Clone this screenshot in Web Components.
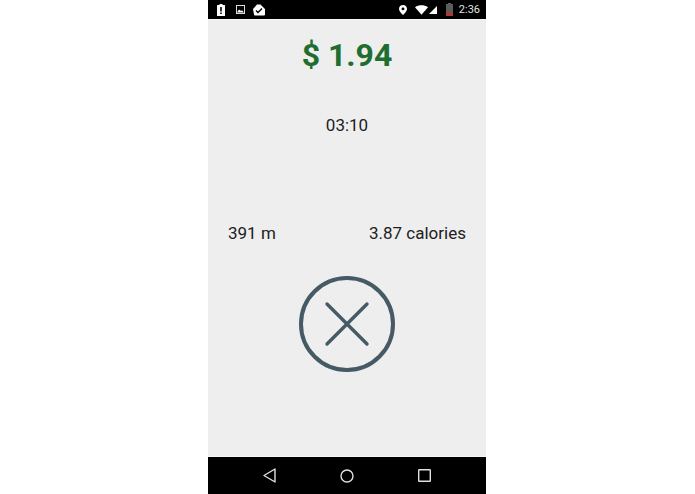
<!DOCTYPE html>
<html>
<head>
<meta charset="utf-8">
<title>Ride</title>
<style>
    html, body { margin: 0; height: 100%; background: #fff; }
    body { display: flex; justify-content: center; font-family: Roboto, sans-serif; }
</style>
</head>
<body>
<phone-screen>
    <status-bar slot="top"></status-bar>
    <trip-panel price="$ 1.94" time="03:10" distance="391 m" calories="3.87 calories"></trip-panel>
    <nav-bar slot="bottom"></nav-bar>
</phone-screen>

<script>
class PhoneScreen extends HTMLElement {
    constructor() {
        super();
        this.attachShadow({ mode: 'open' });
        this.shadowRoot.innerHTML = `
            <style>
                :host {
                    display: flex;
                    flex-direction: column;
                    width: 278px;
                    height: 494px;
                    margin-left: -1px;
                    background: #eeeeee;
                }
            </style>
            <slot name="top"></slot>
            <slot></slot>
            <slot name="bottom"></slot>
        `;
    }
}

class StatusBar extends HTMLElement {
    constructor() {
        super();
        this.attachShadow({ mode: 'open' });
        this.shadowRoot.innerHTML = `
            <style>
                :host {
                    display: flex;
                    align-items: center;
                    height: 19px;
                    padding: 0 6px 0 9px;
                    background: #000;
                    color: #fff;
                    border-bottom: 1px solid #f6f6f6;
                }
                .left, .right { display: flex; align-items: center; }
                .right { margin-left: auto; }
                svg { display: block; }
                .clock { font-size: 11px; color: #e4e4e4; margin-left: 6px; }
            </style>
            <div class="left">
                <svg width="8" height="12" viewBox="0 0 8 12" style="margin-right:11px">
                    <path fill="#fff" fill-rule="evenodd" d="M2.500 0h3v1H7.500a.5.5 0 0 1 .5.5V11.500a.5.5 0 0 1-.5.5H.5a.5.5 0 0 1-.5-.5V1.500a.5.5 0 0 1 .5-.5H2.500zM3.200 3v4.500h1.600V3zM3.200 8.500V10h1.600V8.500z"/>
                </svg>
                <svg width="9" height="9" viewBox="0 0 9 9" style="margin-right:8px">
                    <rect x=".5" y=".5" width="8" height="8" fill="none" stroke="#ddd"/>
                    <path fill="#fff" d="M1 7.500 3 4.500 5 6l1-.8L8 7.500z"/>
                </svg>
                <svg width="12" height="12" viewBox="0 0 12 12">
                    <path fill="#fff" d="M4 .5h3.500L12 5v5.500a1 1 0 0 1-1 1H2a1 1 0 0 1-1-1L0 5z"/>
                    <path fill="none" stroke="#000" stroke-width="1.400" d="M3 6.500 5 8.500 9 4.500"/>
                </svg>
            </div>
            <div class="right">
                <svg width="8" height="10" viewBox="0 0 9 11" style="margin-right:8px">
                    <path fill="#fff" fill-rule="evenodd" d="M4.500 0C2 0 0 1.900 0 4.300 0 7.300 4.500 11 4.500 11S9 7.300 9 4.300C9 1.900 7 0 4.500 0zM4.500 2.700a1.600 1.600 0 1 1 0 3.200 1.600 1.600 0 0 1 0-3.200z"/>
                </svg>
                <svg width="13" height="10" viewBox="0 0 14 10" style="margin-right:1px">
                    <path fill="#fff" d="M0 2C4-.7 10-.7 14 2L7 10z"/>
                </svg>
                <svg width="8" height="10" viewBox="0 0 10 10" style="margin-right:9px">
                    <path fill="#fff" d="M10 0V10H0z"/>
                </svg>
                <svg width="7" height="13" viewBox="0 0 7 13">
                    <rect x="2" y="0" width="3" height="1.500" fill="#666"/>
                    <rect x="0" y="1" width="7" height="12" fill="#5c5c5c"/>
                    <rect x="0" y="10" width="7" height="3" fill="#b8352b"/>
                </svg>
                <span class="clock">2:36</span>
            </div>
        `;
    }
}

class TripPanel extends HTMLElement {
    constructor() {
        super();
        this.attachShadow({ mode: 'open' });
    }

    connectedCallback() {
        const price = this.getAttribute('price') || '';
        const time = this.getAttribute('time') || '';
        const distance = this.getAttribute('distance') || '';
        const calories = this.getAttribute('calories') || '';

        this.shadowRoot.innerHTML = `
            <style>
                :host {
                    display: flex;
                    flex-direction: column;
                    flex: 1;
                    align-items: center;
                    color: #212121;
                    font-size: 17px;
                }
                .price {
                    margin-top: 16px;
                    font-size: 32px;
                    line-height: 38px;
                    font-weight: 700;
                    color: #1f6e30;
                }
                .time { margin-top: 41px; line-height: 20px; }
                .stats {
                    display: flex;
                    justify-content: space-between;
                    align-self: stretch;
                    margin-top: 88px;
                    padding: 0 20px;
                    line-height: 20px;
                }
                .stop { display: block; margin-top: 33px; }
            </style>
            <div class="price">${price}</div>
            <div class="time">${time}</div>
            <div class="stats">
                <span>${distance}</span>
                <span>${calories}</span>
            </div>
            <svg class="stop" width="96" height="96" viewBox="0 0 96 96" fill="none" stroke="#455a64">
                <circle cx="48" cy="48" r="46" stroke-width="4"/>
                <path d="M28 28 68 68M68 28 28 68" stroke-width="3.400" stroke-linecap="round"/>
            </svg>
        `;
    }
}

class NavBar extends HTMLElement {
    constructor() {
        super();
        this.attachShadow({ mode: 'open' });
        this.shadowRoot.innerHTML = `
            <style>
                :host {
                    display: flex;
                    align-items: center;
                    justify-content: space-between;
                    height: 37px;
                    padding: 0 55px;
                    background: #000;
                    box-shadow: 0 -1px 0 #f6f6f6;
                }
                svg { display: block; }
            </style>
            <svg width="13" height="15" viewBox="0 0 13 15" fill="none" stroke="#e0e0e0" stroke-width="1.400">
                <path d="M12 1 1 7.500 12 14z" stroke-linejoin="round"/>
            </svg>
            <svg width="14" height="14" viewBox="0 0 14 14" fill="none" stroke="#e0e0e0" stroke-width="1.400">
                <circle cx="7" cy="7" r="6"/>
            </svg>
            <svg width="13" height="13" viewBox="0 0 13 13" fill="none" stroke="#e0e0e0" stroke-width="1.400">
                <rect x=".7" y=".7" width="11.600" height="11.600" rx=".5"/>
            </svg>
        `;
    }
}

customElements.define('phone-screen', PhoneScreen);
customElements.define('status-bar', StatusBar);
customElements.define('trip-panel', TripPanel);
customElements.define('nav-bar', NavBar);
</script>
</body>
</html>
